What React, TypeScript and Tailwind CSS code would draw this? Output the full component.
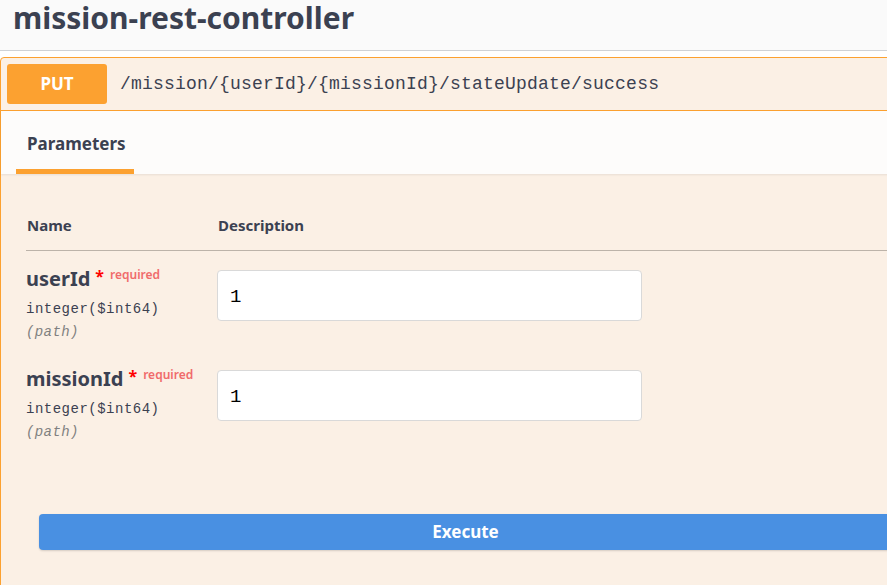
import React from "react";

const sans = "font-['Noto_Sans',Roboto,sans-serif]";
const mono = "font-['Liberation_Mono','DejaVu_Sans_Mono',monospace]";

function ParamRow({ name }: { name: string }) {
  return (
    <div className="flex h-[100px] items-start pt-[14px]">
      <div className="w-[191px] shrink-0">
        <div className="flex h-[26px] items-start">
          <span className="text-[20px] font-bold leading-[27px] text-[#3b4151]">{name}</span>
          <span className="ml-[5px] mt-[2px] text-[16px] font-bold leading-[18px] text-[#ff0000]">*</span>
          <span className="ml-[6px] mt-[2px] text-[12px] font-semibold leading-[16px] text-[#f06b6b]">required</span>
        </div>
        <div className={`${mono} mt-[7px] text-[14px] leading-[22px] tracking-[0.5px] text-[#3b4151]`}>
          integer($int64)
        </div>
        <div className={`${mono} mt-[1px] text-[14px] italic leading-[22px] tracking-[0.4px] text-[#808080]`}>
          (path)
        </div>
      </div>
      <div className="mt-[5px] flex h-[51px] w-[425px] items-center rounded-[4px] border border-[#d9d9d9] bg-white pl-[12px] pt-[4px]">
        <span className={`${mono} text-[19px] text-black`}>1</span>
      </div>
    </div>
  );
}

export default function App() {
  return (
    <div className={`${sans} h-[585px] w-[887px] overflow-hidden bg-white`}>
      <div className="h-[51px] border-b border-[#cfd2d6] bg-[#fafafa] pl-[13px]">
        <h1 className="text-[30px] font-bold leading-[36px] text-[#3b4151]">mission-rest-controller</h1>
      </div>
      <div className="mt-[6px] w-[940px] rounded-l-[4px] border border-[#fca130] bg-[#fbf0e5]">
        <div className="flex h-[53px] items-center border-b border-[#fca130] pl-[6px]">
          <div className="flex h-[40px] w-[100px] items-center justify-center rounded-[3px] bg-[#fca130] text-[17px] font-bold text-white">
            PUT
          </div>
          <span className={`${mono} ml-[13px] text-[18px] tracking-[0.2px] text-[#3b4151]`}>
            /mission/{"{userId}"}/{"{missionId}"}/stateUpdate/success
          </span>
        </div>
        <div className="flex h-[63px] items-end bg-[#fdfcfb] pl-[15px] shadow-[0_1px_2px_rgba(0,0,0,0.08)]">
          <div className="flex h-full w-[118px] items-center border-b-[5px] border-[#fca130] pl-[11px] pt-[7px] text-[17px] font-bold text-[#3b4151]">
            Parameters
          </div>
        </div>
        <div className="pl-[25px] pt-[40px]">
          <div className="flex h-[37px] items-start border-b border-[#bcb3a9] text-[15px] font-bold text-[#3b4151]">
            <span className="w-[192px] pl-[1px]">Name</span>
            <span>Description</span>
          </div>
          <ParamRow name="userId" />
          <ParamRow name="missionId" />
        </div>
        <div className="pb-[40px] pl-[38px] pt-[63px]">
          <button className="flex h-[36px] w-[853px] items-center justify-center rounded-[4px] bg-[#4990e2] text-[17px] font-bold text-white shadow-[0_1px_2px_rgba(0,0,0,0.15)]">
            Execute
          </button>
        </div>
      </div>
    </div>
  );
}
